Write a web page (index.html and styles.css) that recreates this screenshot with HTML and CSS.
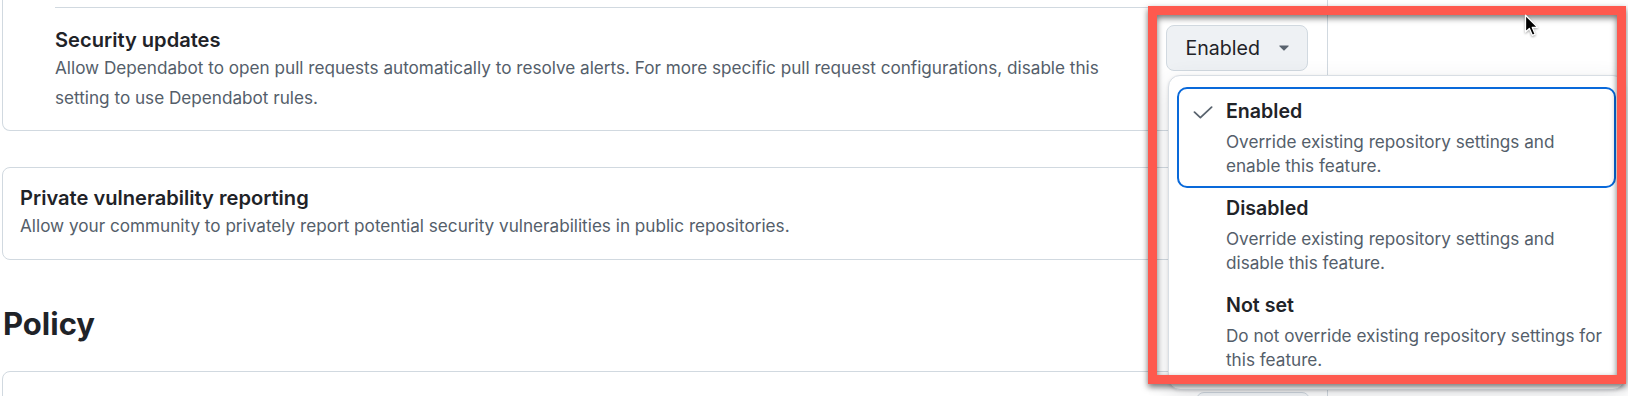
FILE: index.html
```html
<!DOCTYPE html>
<html lang="en">
<head>
<meta charset="utf-8">
<title>Code security settings</title>
<link rel="stylesheet" href="styles.css">
</head>
<body>
<div class="page">
  <section class="card card-top">
    <div class="prev"></div>
    <div class="setting sub">
      <div class="setting-text">
        <h3 class="setting-title">Security updates</h3>
        <p class="setting-desc">Allow Dependabot to open pull requests automatically to resolve alerts. For more specific pull request configurations, disable this<br>setting to use Dependabot rules.</p>
      </div>
      <button class="select-btn" type="button">
        <span>Enabled</span>
        <svg class="caret" width="10" height="6" viewBox="0 0 10 6" aria-hidden="true"><path d="M0.7 0.4h8.6a.45.45 0 0 1 .32.77L5.32 5.47a.45.45 0 0 1-.64 0L.38 1.17A.45.45 0 0 1 .7.4z"/></svg>
      </button>
    </div>
  </section>

  <section class="card card-pvr">
    <div class="setting">
      <div class="setting-text">
        <h3 class="setting-title">Private vulnerability reporting</h3>
        <p class="setting-desc">Allow your community to privately report potential security vulnerabilities in public repositories.</p>
      </div>
    </div>
  </section>

  <h2 class="section-title">Policy</h2>

  <section class="card card-policy">
    <div class="setting">
      <div class="setting-text"></div>
      <button class="select-btn narrow" type="button" aria-label="Policy setting"></button>
    </div>
  </section>
</div>

<div class="menu" role="listbox">
  <div class="option selected" role="option">
    <svg class="check" width="20" height="14" viewBox="0 0 20 14" aria-hidden="true"><polyline points="1.5,6.2 7.4,11.6 18.6,1.2"/></svg>
    <div class="opt-title">Enabled</div>
    <div class="opt-desc">Override existing repository settings and<br>enable this feature.</div>
  </div>
  <div class="option" role="option">
    <span class="check-space"></span>
    <div class="opt-title">Disabled</div>
    <div class="opt-desc">Override existing repository settings and<br>disable this feature.</div>
  </div>
  <div class="option" role="option">
    <span class="check-space"></span>
    <div class="opt-title">Not set</div>
    <div class="opt-desc">Do not override existing repository settings for<br>this feature.</div>
  </div>
</div>

<div class="annotation"></div>

<svg class="cursor" width="16" height="24" viewBox="0 0 16 24" aria-hidden="true"><path d="M1.5 1.2 L1.5 18 L5.4 14.4 L8.4 21.4 L11.2 20.2 L8.3 13.4 L13.6 13.4 Z"/></svg>
</body>
</html>
```

FILE: styles.css
```css
* {
  box-sizing: border-box;
}

html,
body {
  margin: 0;
  padding: 0;
}

body {
  position: relative;
  width: 1628px;
  height: 396px;
  overflow: hidden;
  background: #ffffff;
  color: #1f2328;
  font-family: Inter, "Noto Sans", "Liberation Sans", sans-serif;
}

.page {
  width: 1328px;
  padding-left: 2px;
}

.card {
  background: #ffffff;
  border: 1px solid #d1d9e0;
  border-radius: 8px;
}

.card-top {
  border-top: 0;
  border-radius: 0 0 8px 8px;
}

.prev {
  height: 7px;
}

.setting {
  display: flex;
  align-items: flex-start;
  justify-content: space-between;
  gap: 24px;
  padding: 17px 18px 18px 17px;
}

.setting.sub {
  margin-left: 52px;
  border-top: 1px solid #d1d9e0;
  padding: 19px 19px 17px 0;
}

.setting-title {
  margin: 0;
  font-size: 20.1px;
  font-weight: 600;
  line-height: 26px;
  color: #1f2328;
}

.setting-desc {
  margin: 0;
  font-size: 17.15px;
  line-height: 30px;
  color: #545e6a;
  white-space: nowrap;
}

.select-btn {
  flex-shrink: 0;
  display: flex;
  align-items: center;
  gap: 19px;
  height: 46px;
  margin-top: -2px;
  padding: 0 18px;
  border: 1px solid #d1d9e0;
  border-radius: 8px;
  background: #eef1f4;
  color: #1f2328;
  font-family: inherit;
  font-size: 19.6px;
  font-weight: 400;
}

.caret {
  fill: #59636e;
}

.card-pvr {
  margin-top: 36px;
}

.section-title {
  margin: 44px 0 27px 1px;
  font-size: 31px;
  font-weight: 700;
  line-height: 40px;
  color: #1f2328;
}

.card-policy {
  height: 120px;
}

.card-policy .setting {
  padding: 20px 17px;
}

.select-btn.narrow {
  width: 114px;
  margin-top: 0;
  background: #f6f8fa;
}

/* dropdown menu */
.menu {
  position: absolute;
  left: 1168px;
  top: 75px;
  width: 457px;
  padding: 13px 10px 9px;
  background: #ffffff;
  border: 1px solid #d8dee4;
  border-radius: 12px;
  box-shadow: 0 1px 3px rgba(31, 35, 40, 0.12), 0 8px 24px rgba(66, 74, 83, 0.14);
}

.option {
  display: grid;
  grid-template-columns: 20px 1fr;
  column-gap: 13px;
  align-content: start;
  height: 97px;
  padding: 8px 8px 10px 14px;
  border-radius: 8px;
}

.option.selected {
  outline: 2px solid #0969da;
  outline-offset: 0;
}

.check {
  grid-column: 1;
  grid-row: 1;
  align-self: center;
  margin-top: 4px;
  fill: none;
  stroke: #59636e;
  stroke-width: 1.8;
  stroke-linecap: round;
  stroke-linejoin: round;
}

.check-space {
  grid-column: 1;
  grid-row: 1;
}

.opt-title {
  grid-column: 2;
  grid-row: 1;
  font-size: 19.6px;
  font-weight: 600;
  line-height: 28px;
  color: #1f2328;
}

.opt-desc {
  grid-column: 2;
  grid-row: 2;
  margin-top: 5px;
  font-size: 17.15px;
  line-height: 23.5px;
  color: #545e6a;
  white-space: nowrap;
}

/* red annotation frame drawn over the screenshot */
.annotation {
  position: absolute;
  left: 1148px;
  top: 6px;
  width: 478px;
  height: 378px;
  border: 9px solid #fe594e;
  filter: drop-shadow(0 3px 3px rgba(0, 0, 0, 0.55));
  pointer-events: none;
}

.cursor {
  position: absolute;
  left: 1524px;
  top: 14px;
  fill: #000000;
  stroke: #ffffff;
  stroke-width: 1.3;
  stroke-linejoin: round;
  filter: drop-shadow(0 1px 1px rgba(0, 0, 0, 0.35));
}
```
